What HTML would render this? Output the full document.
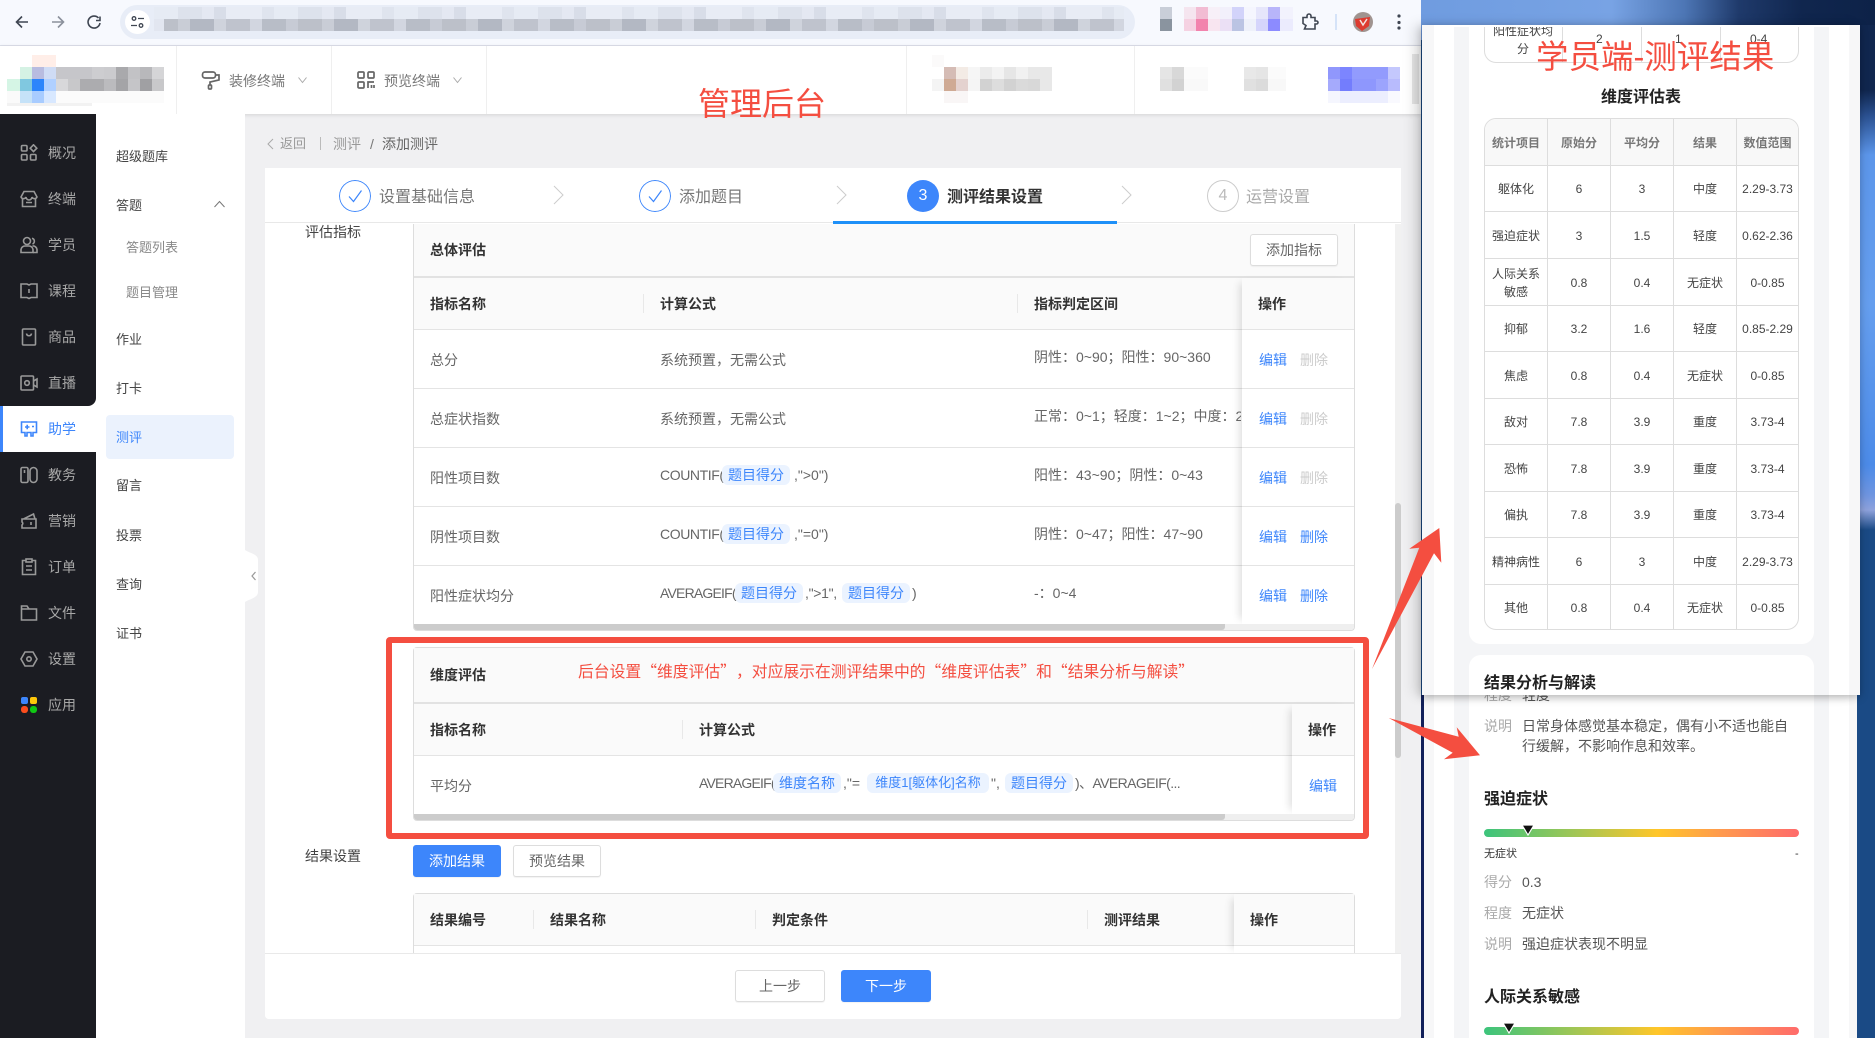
<!DOCTYPE html>
<html lang="zh-CN">
<head>
<meta charset="utf-8">
<title>管理后台 - 添加测评</title>
<style>
html,body{margin:0;padding:0;width:1875px;height:1038px;overflow:hidden;background:#1a4a85}
body{position:relative;font-family:"Liberation Sans","Noto Sans CJK SC",sans-serif;font-size:14px;color:#666}
div,span,svg,table{box-sizing:border-box}
.a{position:absolute}
.t{position:absolute;white-space:nowrap;line-height:14px;height:14px}
.h{font-weight:700;color:#333}
.g{color:#666}
.bl{color:#3d86fb}
.dis{color:#ccc}
.tag{position:absolute;height:20px;line-height:20px;background:#ebf3ff;color:#3d86fb;border-radius:6px;text-align:center;white-space:nowrap}
.ln{position:absolute;background:#e4e4e4}
.sep{position:absolute;width:1px;height:19px;background:#e8e8e8}
.btn{position:absolute;border:1px solid #ddd;border-radius:3px;background:#fff;color:#666;text-align:center;box-shadow:0 1px 1px rgba(0,0,0,.05)}
.pri{background:#3d86fb;border-color:#3d86fb;color:#fff}
.side{position:absolute;left:48px;color:#a8a8a8;line-height:14px;white-space:nowrap}
.ic{position:absolute;left:20px;width:18px;height:18px;fill:none;stroke:#999;stroke-width:1.6}
.sub{position:absolute;font-size:13px;line-height:13px;color:#444;white-space:nowrap}
.sop{position:absolute;background:#fff;box-shadow:-7px 0 8px -5px rgba(0,0,0,.14)}
.step{position:absolute;width:32px;height:32px;border-radius:50%;top:180px;text-align:center;line-height:30px;font-size:16px}
.tb{border-collapse:separate;border-spacing:0;table-layout:fixed;width:100%;font-size:12px;color:#444}
.tb td{border-right:1px solid #ddd;border-bottom:1px solid #ddd;text-align:center;padding:1px 2px 0;line-height:18px;overflow:hidden}
.tb tr td:last-child{border-right:0}
.tb tr:last-child td{border-bottom:0}
.tb .th td{background:#f8f8f8;color:#777;font-weight:700}
.ttl{position:absolute;font-weight:700;font-size:16px;line-height:16px;color:#222;white-space:nowrap}
.lab{position:absolute;left:1484px;color:#aaa;line-height:14px;white-space:nowrap}
.val{position:absolute;left:1522px;color:#555;line-height:14px;white-space:nowrap}
.bar{position:absolute;left:1484px;width:315px;height:8.5px;border-radius:4px;background:linear-gradient(90deg,#3cc47c 0%,#a5c653 30%,#ffc629 55%,#ff9a4d 75%,#ff6b6b 100%)}
.red{position:absolute;color:#f44e40;white-space:nowrap;font-weight:400}
.cjk{font-family:"Noto Sans CJK SC",sans-serif;text-spacing-trim:space-all;font-feature-settings:"palt" 0,"chws" 0,"halt" 0}
.st{position:absolute;white-space:nowrap;top:190px;font-size:16px;height:16px;line-height:16px}
</style>
</head>
<body>

<!-- desktop wallpaper -->
<div class="a" style="left:1421px;top:0;width:454px;height:40px;background:linear-gradient(90deg,#6f9ce0 0%,#78a3e4 42%,#4d76b5 58%,#1f3a6b 70%,#10264e 84%,#0d2248 100%)"></div>
<div class="a" style="left:1855px;top:25px;width:20px;height:1013px;background:linear-gradient(180deg,#10264e 0,#10264e 65px,#2a5090 90px,#5c96ea 130px,#659eee 280px,#4c8be8 440px,#6f95e0 470px,#8ea2dc 485px,#1a4a85 505px,#1a4a85 1013px)"></div>

<!-- browser window -->
<div class="a" style="left:0;top:0;width:1421px;height:1038px;background:#f0f0f2;overflow:hidden">

  <!-- chrome toolbar -->
  <div class="a" style="left:0;top:0;width:1421px;height:46px;background:#f7f9fe;border-bottom:1px solid #dcdfea"></div>
  <svg class="a" style="left:12px;top:12px" width="94" height="20" viewBox="0 0 94 20" fill="none" stroke="#3f4652" stroke-width="1.6">
    <path d="M16 10H5M10 4.500 4.500 10 10 15.500"/>
    <path d="M40 10h11M46 4.500 51.500 10 46 15.500" stroke="#8b919c"/>
    <path d="M86.500 6A6 6 0 1 0 88 11M88 4.500V8.500H84"/>
  </svg>
  <div class="a" style="left:120px;top:5px;width:1015px;height:34px;background:#e8edf7;border-radius:17px"></div>
  <div class="a" style="left:125px;top:10px;width:25px;height:24px;background:#fff;border-radius:50%"></div>
  <svg class="a" style="left:130px;top:15px" width="15" height="14" viewBox="0 0 15 14" fill="none" stroke="#3f4652" stroke-width="1.3"><circle cx="4" cy="3.500" r="1.800"/><path d="M8 3.500h6M1 10.500h6"/><circle cx="11" cy="10.500" r="1.800"/></svg>
  <div class="a" style="left:154px;top:7px;width:970px;height:12px;background:repeating-linear-gradient(90deg,#e6ebf4 0 24px,#dde2ec 24px 48px,#e4e8f2 48px 60px,#d8dde8 60px 72px,#e8ecf5 72px 108px,#dfe4ee 108px 120px)"></div>
  <div class="a" style="left:154px;top:19px;width:970px;height:12px;background:repeating-linear-gradient(90deg,#bcc0c9 0 24px,#c9cdd6 24px 36px,#b3b8c3 36px 60px,#cfd3dc 60px 72px,#bfc3cd 72px 96px,#d2d6e0 96px 108px,#b8bdc7 108px 132px,#c7cbd5 132px 144px)"></div>
  <div class="a" style="left:154px;top:19px;width:10px;height:12px;background:#e2e6f0"></div>
  <svg class="a" style="left:1160px;top:7px" width="134" height="24" shape-rendering="crispEdges">
    <rect x="0" y="0" width="12" height="12" fill="#c9ced8"/><rect x="0" y="12" width="12" height="12" fill="#8a949f"/>
    <rect x="24" y="0" width="12" height="12" fill="#f5e5ef"/><rect x="24" y="12" width="12" height="12" fill="#f5d2e2"/>
    <rect x="36" y="0" width="12" height="12" fill="#f2bcd3"/><rect x="36" y="12" width="12" height="12" fill="#f283ad"/>
    <rect x="48" y="0" width="12" height="12" fill="#f7f0f8"/><rect x="48" y="12" width="12" height="12" fill="#f8e5f0"/>
    <rect x="60" y="0" width="12" height="12" fill="#f2f0fb"/><rect x="60" y="12" width="12" height="12" fill="#ebe0f5"/>
    <rect x="72" y="0" width="12" height="12" fill="#d2d3fa"/><rect x="72" y="12" width="12" height="12" fill="#bbc4e3"/>
    <rect x="84" y="0" width="12" height="12" fill="#f5f6fe"/><rect x="84" y="12" width="12" height="12" fill="#eef1fa"/>
    <rect x="96" y="0" width="12" height="12" fill="#e6e6fb"/><rect x="96" y="12" width="12" height="12" fill="#d5d5fb"/>
    <rect x="108" y="0" width="12" height="12" fill="#b8b5fa"/><rect x="108" y="12" width="12" height="12" fill="#8c8bff"/>
    <rect x="120" y="0" width="13" height="12" fill="#f2f2fd"/><rect x="120" y="12" width="13" height="12" fill="#ebebfd"/>
  </svg>
  <svg class="a" style="left:1301px;top:13px" width="18" height="18" viewBox="0 0 18 18" fill="none" stroke="#3f4652" stroke-width="1.600"><path d="M2 4.500H6V3a2 2 0 0 1 4 0V4.500H14V8h1.500a1.500 1.500 0 0 1 0 3H14V16H3.500L5 12.500 2 10.500Z"/></svg>
  <div class="a" style="left:1335px;top:14px;width:2px;height:16px;background:#d5e3f8"></div>
  <svg class="a" style="left:1353px;top:12px" width="20" height="20" viewBox="0 0 20 20"><circle cx="10" cy="10" r="10" fill="#a09490"/><path d="M2 7 17 5 16 14 9 19 3 14Z" fill="#dd3b30"/><path d="M7 8l3 5 4-6" fill="none" stroke="#f3e3e0" stroke-width="1.500"/></svg>
  <svg class="a" style="left:1396px;top:13px" width="6" height="18"><circle cx="3" cy="3" r="1.600" fill="#3f4652"/><circle cx="3" cy="9.500" r="1.600" fill="#3f4652"/><circle cx="3" cy="15" r="1.600" fill="#3f4652"/></svg>

  <!-- app top bar -->
  <div class="a" style="left:0;top:46px;width:1421px;height:68px;background:#fff;box-shadow:0 1px 4px rgba(0,0,0,.12)"></div>
  <svg class="a" style="left:7px;top:55px" width="158" height="52" shape-rendering="crispEdges">
    <rect x="25" y="0" width="24" height="12" fill="#ffeee8"/>
    <rect x="13" y="12" width="12" height="12" fill="#d5f2e4"/><rect x="25" y="12" width="12" height="12" fill="#b8bce0"/><rect x="37" y="12" width="12" height="12" fill="#cfdcf5"/>
    <rect x="49" y="12" width="36" height="12" fill="#c6c6ca"/><rect x="85" y="12" width="12" height="12" fill="#cdcdd0"/><rect x="97" y="12" width="12" height="12" fill="#cbcbce"/><rect x="109" y="12" width="12" height="12" fill="#a9a9ac"/><rect x="121" y="12" width="12" height="12" fill="#c2c2c5"/><rect x="133" y="12" width="12" height="12" fill="#b8b8bb"/><rect x="145" y="12" width="12" height="12" fill="#d5d5d7"/>
    <rect x="0" y="24" width="13" height="12" fill="#d5f5e5"/><rect x="13" y="24" width="12" height="12" fill="#80c8e0"/><rect x="25" y="24" width="12" height="12" fill="#2c85fb"/><rect x="37" y="24" width="12" height="12" fill="#b0d0ff"/>
    <rect x="49" y="24" width="12" height="12" fill="#d8d8da"/><rect x="61" y="24" width="12" height="12" fill="#c8c8ca"/><rect x="73" y="24" width="24" height="12" fill="#acacaf"/><rect x="97" y="24" width="12" height="12" fill="#bbbbbe"/><rect x="109" y="24" width="12" height="12" fill="#a4a4a7"/><rect x="121" y="24" width="12" height="12" fill="#c5c5c8"/><rect x="133" y="24" width="12" height="12" fill="#a0a0a3"/><rect x="145" y="24" width="12" height="12" fill="#c8c8ca"/>
    <rect x="0" y="36" width="13" height="12" fill="#fafafa"/><rect x="13" y="36" width="12" height="12" fill="#c5e2f8"/><rect x="25" y="36" width="12" height="12" fill="#a8ccff"/><rect x="37" y="36" width="12" height="12" fill="#d8e8ff"/><rect x="49" y="36" width="108" height="12" fill="#fbfbfb"/>
    <rect x="0" y="48" width="85" height="3" fill="#f2f2f2"/>
  </svg>
  <div class="a" style="left:176px;top:46px;width:1px;height:68px;background:#efefef"></div>
  <div class="a" style="left:331px;top:46px;width:1px;height:68px;background:#efefef"></div>
  <div class="a" style="left:486px;top:46px;width:1px;height:68px;background:#efefef"></div>
  <div class="a" style="left:906px;top:46px;width:1px;height:68px;background:#efefef"></div>
  <div class="a" style="left:1134px;top:46px;width:1px;height:68px;background:#efefef"></div>

  <svg class="a" style="left:201px;top:70px" width="20" height="20" viewBox="0 0 20 20" fill="none" stroke="#666" stroke-width="1.700"><rect x="1.500" y="2" width="13" height="6" rx="2.500"/><path d="M14.500 5H18V10L9 12V15"/><rect x="7.500" y="15" width="3" height="4" rx="1"/></svg>
  <div class="t" style="left:229px;top:74px;color:#777">装修终端</div>
  <svg class="a" style="left:298px;top:76px" width="9" height="8" fill="none" stroke="#aaa"><path d="M.5 1.500 4.500 6.500 8.500 1.500"/></svg>
  <svg class="a" style="left:357px;top:71px" width="18" height="18" viewBox="0 0 18 18" fill="none" stroke="#666" stroke-width="1.700"><rect x="1" y="1" width="6" height="6" rx="1"/><rect x="11" y="1" width="6" height="6" rx="1"/><rect x="1" y="11" width="6" height="6" rx="1"/><path d="M11 17V11H17M14.500 14V17M17 14V17"/></svg>
  <div class="t" style="left:384px;top:74px;color:#777">预览终端</div>
  <svg class="a" style="left:453px;top:76px" width="9" height="8" fill="none" stroke="#aaa"><path d="M.5 1.500 4.500 6.500 8.500 1.500"/></svg>

  <svg class="a" style="left:932px;top:55px" width="122" height="48" shape-rendering="crispEdges">
    <rect x="0" y="0" width="12" height="12" fill="#fbfafa"/><rect x="12" y="12" width="12" height="12" fill="#d5bcb5"/><rect x="24" y="12" width="12" height="12" fill="#f3ebe5"/><rect x="36" y="12" width="12" height="12" fill="#f6f6f6"/><rect x="48" y="12" width="12" height="12" fill="#ebebeb"/><rect x="60" y="12" width="12" height="12" fill="#f3f3f3"/><rect x="72" y="12" width="12" height="12" fill="#e6e6e6"/><rect x="84" y="12" width="12" height="12" fill="#f1f1f1"/><rect x="96" y="12" width="24" height="12" fill="#e8e8e8"/>
    <rect x="0" y="24" width="12" height="12" fill="#f4f4f4"/><rect x="12" y="24" width="12" height="12" fill="#cfaa94"/><rect x="24" y="24" width="12" height="12" fill="#e4d2cf"/><rect x="36" y="24" width="12" height="12" fill="#f5f5f5"/><rect x="48" y="24" width="12" height="12" fill="#d2d2d2"/><rect x="60" y="24" width="12" height="12" fill="#dddddd"/><rect x="72" y="24" width="12" height="12" fill="#d2d2d2"/><rect x="84" y="24" width="12" height="12" fill="#dadada"/><rect x="96" y="24" width="12" height="12" fill="#d8d8d8"/><rect x="108" y="24" width="12" height="12" fill="#e8e8e8"/>
    <rect x="12" y="36" width="24" height="12" fill="#f9f6f6"/>
  </svg>
  <svg class="a" style="left:1160px;top:67px" width="126" height="24" shape-rendering="crispEdges">
    <rect x="0" y="0" width="12" height="12" fill="#e5e5e5"/><rect x="12" y="0" width="12" height="12" fill="#d8d8d8"/><rect x="24" y="0" width="24" height="12" fill="#fbfbfb"/>
    <rect x="0" y="12" width="12" height="12" fill="#e0e0e0"/><rect x="12" y="12" width="12" height="12" fill="#d2d2d2"/><rect x="24" y="12" width="24" height="12" fill="#f9f9f9"/>
    <rect x="84" y="0" width="12" height="12" fill="#e8e8e8"/><rect x="96" y="0" width="12" height="12" fill="#e5e5e5"/><rect x="108" y="0" width="18" height="12" fill="#fbfbfb"/>
    <rect x="84" y="12" width="12" height="12" fill="#e0e0e0"/><rect x="96" y="12" width="12" height="12" fill="#dbdbdb"/><rect x="108" y="12" width="18" height="12" fill="#f8f8f8"/>
  </svg>
  <svg class="a" style="left:1328px;top:67px" width="72" height="36" shape-rendering="crispEdges">
    <rect x="0" y="0" width="12" height="12" fill="#9097fc"/><rect x="12" y="0" width="12" height="12" fill="#7c85ff"/><rect x="24" y="0" width="36" height="12" fill="#929bfd"/><rect x="60" y="0" width="12" height="12" fill="#c4c8fd"/>
    <rect x="0" y="12" width="12" height="12" fill="#a5aafc"/><rect x="12" y="12" width="12" height="12" fill="#737dfd"/><rect x="24" y="12" width="24" height="12" fill="#8e97fd"/><rect x="48" y="12" width="12" height="12" fill="#9ca4fd"/><rect x="60" y="12" width="12" height="12" fill="#b8bbfd"/>
    <rect x="0" y="24" width="12" height="12" fill="#f5f6fe"/><rect x="12" y="24" width="48" height="12" fill="#eceefe"/><rect x="60" y="24" width="12" height="12" fill="#f9f9fe"/>
  </svg>
  <div class="a" style="left:1412px;top:54px;width:7px;height:50px;background:#e6e6e6"></div>

  <!-- dark sidebar -->
  <div class="a" style="left:0;top:114px;width:96px;height:924px;background:#1b1c22"></div>
  <div class="a" style="left:0;top:406px;width:96px;height:46px;background:#fff"></div>
  <div class="a" style="left:0;top:398px;width:96px;height:8px;background:#1b1c22;border-bottom-right-radius:8px;box-shadow:8px 0 0 #fff"></div>
  <div class="a" style="left:0;top:452px;width:96px;height:8px;background:#1b1c22;border-top-right-radius:8px"></div>
  <div class="a" style="left:0;top:406px;width:3px;height:46px;background:#3d86fb"></div>

  <svg class="ic" style="top:144px" viewBox="0 0 18 18"><rect x="1.500" y="1.500" width="5.500" height="5.500" rx="1"/><path d="M13.500 .8 16.800 4.200 13.500 7.600 10.200 4.200Z"/><rect x="1.500" y="10.500" width="5.500" height="5.500" rx="1"/><rect x="10.500" y="10.500" width="5.500" height="5.500" rx="1"/></svg>
  <div class="side" style="top:146px">概况</div>
  <svg class="ic" style="top:190px" viewBox="0 0 18 18"><path d="M4 1.500H14L17 7A2.700 2.700 0 0 1 12 7 3 3 0 0 1 6 7 2.700 2.700 0 0 1 1 7Z"/><path d="M2.500 9V16.500H15.500V9M6 12.500H12"/></svg>
  <div class="side" style="top:192px">终端</div>
  <svg class="ic" style="top:236px" viewBox="0 0 18 18"><circle cx="7" cy="5" r="3.500"/><path d="M1 16.500V13.500A4 4 0 0 1 5 10H9A4 4 0 0 1 13 13.500V16.500Z"/><path d="M12 2.300A3 3 0 0 1 12.500 8M12.500 10A4 4 0 0 1 17 13.500V16.500H13"/></svg>
  <div class="side" style="top:238px">学员</div>
  <svg class="ic" style="top:282px" viewBox="0 0 18 18"><path d="M1 2H7L9 3 11 2H17V15.500H11L9 16.500 7 15.500H1ZM9 7V11"/></svg>
  <div class="side" style="top:284px">课程</div>
  <svg class="ic" style="top:328px" viewBox="0 0 18 18"><rect x="2.500" y="1" width="13" height="16" rx="1"/><path d="M6.500 5.500 C7 8.500 11 8.500 11.500 5.500"/></svg>
  <div class="side" style="top:330px">商品</div>
  <svg class="ic" style="top:374px" viewBox="0 0 18 18"><rect x="1" y="2" width="12.500" height="14" rx="1"/><circle cx="7" cy="9" r="2.300"/><path d="M13.500 7 17 5V13L13.500 11"/></svg>
  <div class="side" style="top:376px">直播</div>
  <svg class="ic" style="top:420px;stroke:#3d86fb" viewBox="0 0 18 18"><path d="M1.500 2H16.500V12.500H13V16H11V12.500H7V16H5V12.500H1.500ZM5 7H9.500M7.200 4.800V9.200M12 6.500H14"/></svg>
  <div class="side" style="top:422px;color:#3d86fb">助学</div>
  <svg class="ic" style="top:466px" viewBox="0 0 18 18"><rect x="1" y="1.500" width="7" height="15" rx="1.500"/><rect x="10" y="1.500" width="7" height="15" rx="3.500"/><path d="M4.500 4V7"/></svg>
  <div class="side" style="top:468px">教务</div>
  <svg class="ic" style="top:512px" viewBox="0 0 18 18"><path d="M2 7H16V16H2V13A1.800 1.800 0 0 0 2 10ZM3.500 7 13.500 2 15 7M11 10V13"/></svg>
  <div class="side" style="top:514px">营销</div>
  <svg class="ic" style="top:558px" viewBox="0 0 18 18"><path d="M6 2.500H2.500V16.500H15.500V2.500H12"/><rect x="6" y="1" width="6" height="3"/><path d="M6 8H12M6 12H12"/></svg>
  <div class="side" style="top:560px">订单</div>
  <svg class="ic" style="top:604px" viewBox="0 0 18 18"><path d="M1.500 2H7L9 5H16.500V16H1.500ZM1.500 5H9"/></svg>
  <div class="side" style="top:606px">文件</div>
  <svg class="ic" style="top:650px" viewBox="0 0 18 18"><path d="M5 2H13L17 9 13 16H5L1 9Z"/><circle cx="9" cy="9" r="2.200"/></svg>
  <div class="side" style="top:652px">设置</div>
  <svg class="ic" style="top:696px;stroke:none" viewBox="0 0 18 18"><rect x="1" y="1" width="7" height="7" rx="2" fill="#3d86fb"/><rect x="10" y="1" width="7" height="7" rx="2" fill="#fdc60a"/><rect x="1" y="10" width="7" height="7" rx="3" fill="#fc4d1d"/><rect x="10" y="10" width="7" height="7" rx="3" fill="#10c814"/></svg>
  <div class="side" style="top:698px">应用</div>

  <!-- secondary sidebar -->
  <div class="a" style="left:96px;top:114px;width:149px;height:924px;background:#fff"></div>
  <div class="a" style="left:106px;top:415px;width:128px;height:44px;background:#ebf2fd;border-radius:4px"></div>
  <div class="sub" style="left:116px;top:150px">超级题库</div>
  <div class="sub" style="left:116px;top:199px">答题</div>
  <svg class="a" style="left:214px;top:200px" width="11" height="8" fill="none" stroke="#777"><path d="M.5 7 5.500 1.500 10.500 7"/></svg>
  <div class="sub" style="left:126px;top:241px;color:#888">答题列表</div>
  <div class="sub" style="left:126px;top:286px;color:#888">题目管理</div>
  <div class="sub" style="left:116px;top:333px">作业</div>
  <div class="sub" style="left:116px;top:382px">打卡</div>
  <div class="sub bl" style="left:116px;top:431px;color:#3d86fb">测评</div>
  <div class="sub" style="left:116px;top:479px">留言</div>
  <div class="sub" style="left:116px;top:529px">投票</div>
  <div class="sub" style="left:116px;top:578px">查询</div>
  <div class="sub" style="left:116px;top:627px">证书</div>
  <svg class="a" style="left:245px;top:550px" width="14" height="52"><path d="M0 0 C4 3 13 4 13 10V42C13 48 4 49 0 52Z" fill="#fff"/><path d="M10.500 22 7 26 10.500 30" fill="none" stroke="#999" stroke-width="1.200"/></svg>

  <!-- breadcrumb -->
  <svg class="a" style="left:267px;top:138px" width="7" height="12" fill="none" stroke="#aaa"><path d="M6 1 1 6 6 11"/></svg>
  <div class="t" style="left:280px;top:137px;font-size:13px;color:#999">返回</div>
  <div class="a" style="left:320px;top:137px;width:1px;height:13px;background:#bbb"></div>
  <div class="t" style="left:333px;top:137px;color:#999">测评</div>
  <div class="t" style="left:370px;top:137px;color:#777">/</div>
  <div class="t" style="left:382px;top:137px;color:#666">添加测评</div>

  <!-- main card -->
  <div class="a" style="left:265px;top:168px;width:1136px;height:851px;background:#fff;border-radius:0 0 4px 4px"></div>

  <!-- steps -->
  <div class="a" style="left:265px;top:222px;width:1136px;height:1px;background:#e8e8e8"></div>
  <svg class="step" style="left:339px" viewBox="0 0 32 32" fill="none"><circle cx="16" cy="16" r="15.500" stroke="#3d86fb"/><path d="M10 16.500 14.500 21.500 22.500 10.500" stroke="#3d86fb" stroke-width="1.200"/></svg>
  <div class="st" style="left:379px;color:#777">设置基础信息</div>
  <svg class="a" style="left:553px;top:185px" width="11" height="20" fill="none" stroke="#ccc"><path d="M1 1 10 10 1 19"/></svg>
  <svg class="step" style="left:639px" viewBox="0 0 32 32" fill="none"><circle cx="16" cy="16" r="15.500" stroke="#3d86fb"/><path d="M10 16.500 14.500 21.500 22.500 10.500" stroke="#3d86fb" stroke-width="1.200"/></svg>
  <div class="st" style="left:679px;color:#777">添加题目</div>
  <svg class="a" style="left:836px;top:185px" width="11" height="20" fill="none" stroke="#ccc"><path d="M1 1 10 10 1 19"/></svg>
  <div class="step" style="left:907px;background:#3d86fb;color:#fff;line-height:32px">3</div>
  <div class="st" style="left:947px;color:#333;font-weight:700">测评结果设置</div>
  <svg class="a" style="left:1121px;top:185px" width="11" height="20" fill="none" stroke="#ccc"><path d="M1 1 10 10 1 19"/></svg>
  <div class="step" style="left:1207px;border:1px solid #ccc;color:#bbb">4</div>
  <div class="st" style="left:1246px;color:#aaa">运营设置</div>
  <div class="a" style="left:833px;top:221px;width:284px;height:3px;background:#1e90f8"></div>

  <!-- scroll viewport -->
  <div class="a" style="left:1395px;top:224px;width:6px;height:729px;background:#f1f1f1"></div>
  <div class="a" style="left:1395px;top:503px;width:6px;height:255px;background:#ccc;border-radius:3px"></div>

  <div class="t" style="left:305px;top:225px;color:#444">评估指标</div>
  <div class="t" style="left:305px;top:849px;color:#444">结果设置</div>

  <!-- table 1 -->
  <div class="a" style="left:413px;top:224px;width:942px;height:407px;border:1px solid #ddd;border-top:0;border-radius:0 0 4px 4px;background:#fff;overflow:hidden"></div>
  <div class="a" style="left:414px;top:224px;width:940px;height:105px;background:#fafafa"></div>
  <div class="ln" style="left:414px;top:276px;width:940px;height:2px;background:#e2e2e2"></div>
  <div class="ln" style="left:414px;top:329px;width:940px;height:1px"></div>
  <div class="ln" style="left:414px;top:388px;width:828px;height:1px"></div>
  <div class="ln" style="left:414px;top:447px;width:828px;height:1px"></div>
  <div class="ln" style="left:414px;top:506px;width:828px;height:1px"></div>
  <div class="ln" style="left:414px;top:565px;width:828px;height:1px"></div>
  <div class="sop" style="left:1242px;top:278px;width:112px;height:346px"></div>
  <div class="a" style="left:1242px;top:278px;width:112px;height:52px;background:#fafafa;border-bottom:1px solid #e4e4e4"></div>
  <div class="ln" style="left:1242px;top:388px;width:112px;height:1px"></div>
  <div class="ln" style="left:1242px;top:447px;width:112px;height:1px"></div>
  <div class="ln" style="left:1242px;top:506px;width:112px;height:1px"></div>
  <div class="ln" style="left:1242px;top:565px;width:112px;height:1px"></div>
  <div class="a" style="left:414px;top:624px;width:940px;height:6px;background:#efefef;border-radius:0 0 3px 3px"></div>
  <div class="a" style="left:414px;top:624px;width:811px;height:6px;background:#ccc;border-radius:0 0 3px 3px"></div>

  <div class="t h" style="left:430px;top:243px">总体评估</div>
  <div class="btn" style="left:1250px;top:234px;width:88px;height:32px;line-height:30px">添加指标</div>
  <div class="t h" style="left:430px;top:297px">指标名称</div>
  <div class="sep" style="left:643px;top:294px"></div>
  <div class="t h" style="left:660px;top:297px">计算公式</div>
  <div class="sep" style="left:1017px;top:294px"></div>
  <div class="t h" style="left:1034px;top:297px">指标判定区间</div>
  <div class="t h" style="left:1258px;top:297px">操作</div>

  <div class="t" style="left:430px;top:353px">总分</div>
  <div class="t" style="left:660px;top:353px">系统预置，无需公式</div>
  <div class="t" style="left:1034px;top:350px">阴性：0~90；阳性：90~360</div>
  <div class="t bl" style="left:1259px;top:353px">编辑</div><div class="t dis" style="left:1300px;top:353px">删除</div>

  <div class="t" style="left:430px;top:412px">总症状指数</div>
  <div class="t" style="left:660px;top:412px">系统预置，无需公式</div>
  <div class="a" style="left:1034px;top:409px;width:207px;height:16px;overflow:hidden;white-space:nowrap;line-height:14px">正常：0~1；轻度：1~2；中度：2~3</div>
  <div class="t bl" style="left:1259px;top:412px">编辑</div><div class="t dis" style="left:1300px;top:412px">删除</div>

  <div class="t" style="left:430px;top:471px">阳性项目数</div>
  <div class="t" style="left:660px;top:468px;letter-spacing:-.4px">COUNTIF(</div>
  <div class="tag" style="left:722px;top:465px;width:68px">题目得分</div>
  <div class="t" style="left:794px;top:468px">,"&gt;0")</div>
  <div class="t" style="left:1034px;top:468px">阳性：43~90；阴性：0~43</div>
  <div class="t bl" style="left:1259px;top:471px">编辑</div><div class="t dis" style="left:1300px;top:471px">删除</div>

  <div class="t" style="left:430px;top:530px">阴性项目数</div>
  <div class="t" style="left:660px;top:527px;letter-spacing:-.4px">COUNTIF(</div>
  <div class="tag" style="left:722px;top:524px;width:68px">题目得分</div>
  <div class="t" style="left:794px;top:527px">,"=0")</div>
  <div class="t" style="left:1034px;top:527px">阴性：0~47；阳性：47~90</div>
  <div class="t bl" style="left:1259px;top:530px">编辑</div><div class="t bl" style="left:1300px;top:530px">删除</div>

  <div class="t" style="left:430px;top:589px">阳性症状均分</div>
  <div class="t" style="left:660px;top:586px;letter-spacing:-.8px">AVERAGEIF(</div>
  <div class="tag" style="left:735px;top:583px;width:68px">题目得分</div>
  <div class="t" style="left:805px;top:586px;letter-spacing:-.3px">,"&gt;1",</div>
  <div class="tag" style="left:842px;top:583px;width:68px">题目得分</div>
  <div class="t" style="left:912px;top:586px">)</div>
  <div class="t" style="left:1034px;top:586px">-：0~4</div>
  <div class="t bl" style="left:1259px;top:589px">编辑</div><div class="t bl" style="left:1300px;top:589px">删除</div>

  <!-- table 2 -->
  <div class="a" style="left:413px;top:647px;width:942px;height:174px;border:1px solid #ddd;border-radius:4px;background:#fff;overflow:hidden"></div>
  <div class="a" style="left:414px;top:648px;width:940px;height:107px;background:#fafafa"></div>
  <div class="ln" style="left:414px;top:702px;width:940px;height:2px;background:#e2e2e2"></div>
  <div class="ln" style="left:414px;top:755px;width:940px;height:1px"></div>
  <div class="sop" style="left:1292px;top:704px;width:62px;height:110px"></div>
  <div class="a" style="left:1292px;top:704px;width:62px;height:52px;background:#fafafa;border-bottom:1px solid #e4e4e4"></div>
  <div class="a" style="left:414px;top:814px;width:940px;height:6px;background:#efefef;border-radius:0 0 3px 3px"></div>
  <div class="a" style="left:414px;top:814px;width:811px;height:6px;background:#ccc;border-radius:0 0 3px 3px"></div>

  <div class="t h" style="left:430px;top:668px">维度评估</div>
  <div class="t h" style="left:430px;top:723px">指标名称</div>
  <div class="sep" style="left:682px;top:720px"></div>
  <div class="t h" style="left:699px;top:723px">计算公式</div>
  <div class="t h" style="left:1308px;top:723px">操作</div>
  <div class="t" style="left:430px;top:779px">平均分</div>
  <div class="t" style="left:699px;top:776px;letter-spacing:-.8px">AVERAGEIF(</div>
  <div class="tag" style="left:773px;top:773px;width:68px">维度名称</div>
  <div class="t" style="left:843px;top:776px">,"=</div>
  <div class="tag" style="left:867px;top:773px;width:122px;font-size:13px">维度1[躯体化]名称</div>
  <div class="t" style="left:991px;top:776px">",</div>
  <div class="tag" style="left:1005px;top:773px;width:68px">题目得分</div>
  <div class="t" style="left:1075px;top:776px;letter-spacing:-.6px">)、AVERAGEIF(...</div>
  <div class="t bl" style="left:1309px;top:779px">编辑</div>

  <!-- result buttons -->
  <div class="btn pri" style="left:413px;top:845px;width:88px;height:32px;line-height:30px">添加结果</div>
  <div class="btn" style="left:513px;top:845px;width:88px;height:32px;line-height:30px">预览结果</div>

  <!-- table 3 -->
  <div class="a" style="left:413px;top:893px;width:942px;height:60px;border:1px solid #ddd;border-bottom:0;border-radius:4px 4px 0 0;background:#fff;overflow:hidden"></div>
  <div class="a" style="left:414px;top:894px;width:940px;height:52px;background:#fafafa;border-bottom:1px solid #e4e4e4"></div>
  <div class="sop" style="left:1234px;top:894px;width:120px;height:59px"></div>
  <div class="a" style="left:1234px;top:894px;width:120px;height:52px;background:#fafafa;border-bottom:1px solid #e4e4e4"></div>
  <div class="t h" style="left:430px;top:913px">结果编号</div>
  <div class="sep" style="left:533px;top:910px"></div>
  <div class="t h" style="left:550px;top:913px">结果名称</div>
  <div class="sep" style="left:755px;top:910px"></div>
  <div class="t h" style="left:772px;top:913px">判定条件</div>
  <div class="sep" style="left:1087px;top:910px"></div>
  <div class="t h" style="left:1104px;top:913px">测评结果</div>
  <div class="t h" style="left:1250px;top:913px">操作</div>

  <!-- footer -->
  <div class="a" style="left:265px;top:953px;width:1136px;height:66px;background:#fff;border-top:1px solid #e9e9e9;border-radius:0 0 4px 4px"></div>
  <div class="btn" style="left:735px;top:970px;width:90px;height:32px;line-height:30px">上一步</div>
  <div class="btn pri" style="left:841px;top:970px;width:90px;height:32px;line-height:30px">下一步</div>
</div>

<!-- dark window edge -->
<div class="a" style="left:1421px;top:695px;width:3px;height:343px;background:#12205a"></div>

<!-- lower student screenshot -->
<div class="a" style="left:1424px;top:695px;width:433px;height:343px;overflow:hidden;background:#f7f7f8">
  <div class="a" style="left:-1424px;top:-695px;width:1875px;height:1038px">
    <div class="a" style="left:1434px;top:695px;width:415px;height:343px;background:#fff"></div>
    <div class="a" style="left:1454px;top:695px;width:375px;height:343px;background:#f4f5f7"></div>
    <div class="a" style="left:1469px;top:695px;width:345px;height:343px;background:#fff"></div>

    <div class="lab" style="top:688px">程度</div>
    <div class="val" style="top:688px">轻度</div>
    <div class="lab" style="top:719px">说明</div>
    <div class="val" style="top:719px">日常身体感觉基本稳定，偶有小不适也能自</div>
    <div class="val" style="top:739px">行缓解，不影响作息和效率。</div>

    <div class="ttl" style="left:1484px;top:792px">强迫症状</div>
    <div class="bar" style="top:828.500px"></div>
    <svg class="a" style="left:1521px;top:824px" width="14" height="13"><path d="M1 1H13L7 11Z" fill="#111" stroke="#fff" stroke-width="1.200"/></svg>
    <div class="a" style="left:1484px;top:848px;font-size:11px;line-height:12px;color:#333">无症状</div>
    <div class="a" style="left:1795px;top:848px;font-size:11px;line-height:12px;color:#333">-</div>
    <div class="lab" style="top:875px">得分</div><div class="val" style="top:875px">0.3</div>
    <div class="lab" style="top:906px">程度</div><div class="val" style="top:906px">无症状</div>
    <div class="lab" style="top:937px">说明</div><div class="val" style="top:937px">强迫症状表现不明显</div>

    <div class="ttl" style="left:1484px;top:990px">人际关系敏感</div>
    <div class="bar" style="top:1026.500px"></div>
    <svg class="a" style="left:1502px;top:1022px" width="14" height="13"><path d="M1 1H13L7 11Z" fill="#111" stroke="#fff" stroke-width="1.200"/></svg>
  </div>
</div>

<!-- upper student panel -->
<div class="a" style="left:1422px;top:25px;width:438px;height:670px;overflow:hidden;background:#f7f7f8;box-shadow:0 2px 8px rgba(0,0,0,.25),-8px 0 12px rgba(0,0,0,.12)">
  <div class="a" style="left:-1422px;top:-25px;width:1875px;height:1038px">
    <div class="a" style="left:1434px;top:25px;width:415px;height:670px;background:#fff"></div>
    <div class="a" style="left:1454px;top:25px;width:375px;height:670px;background:#f4f5f7"></div>
    <div class="a" style="left:1469px;top:25px;width:345px;height:619px;background:#fff;border-radius:0 0 12px 12px"></div>
    <div class="a" style="left:1469px;top:655px;width:345px;height:60px;background:#fff;border-radius:12px 12px 0 0"></div>

    <!-- clipped upper table -->
    <div class="a" style="left:1484px;top:5px;width:315px;height:57.500px;border:1px solid #ddd;border-radius:0 0 12px 12px"></div>
    <div class="a" style="left:1562px;top:25px;width:1px;height:37px;background:#ddd"></div>
    <div class="a" style="left:1641px;top:25px;width:1px;height:37px;background:#ddd"></div>
    <div class="a" style="left:1720px;top:25px;width:1px;height:37px;background:#ddd"></div>
    <div class="a" style="left:1493px;top:22px;width:60px;text-align:center;font-size:12px;line-height:18px;color:#444">阳性症状均分</div>
    <div class="a" style="left:1596px;top:33px;font-size:12px;line-height:12px;color:#444">2</div>
    <div class="a" style="left:1675px;top:33px;font-size:12px;line-height:12px;color:#444">1</div>
    <div class="a" style="left:1750px;top:33px;font-size:12px;line-height:12px;color:#444">0-4</div>
    <div class="a" style="left:1434px;top:25px;width:415px;height:2px;background:#fff"></div>

    <div class="ttl" style="left:1601px;top:90px">维度评估表</div>

    <div class="a" style="left:1484px;top:118px;width:315px;height:512px;border:1px solid #ddd;border-radius:12px;overflow:hidden;background:#fff">
      <table class="tb">
        <colgroup><col style="width:63px"><col style="width:63px"><col style="width:63px"><col style="width:63px"><col></colgroup>
        <tr class="th" style="height:47px"><td>统计项目</td><td>原始分</td><td>平均分</td><td>结果</td><td>数值范围</td></tr>
        <tr style="height:46px"><td>躯体化</td><td>6</td><td>3</td><td>中度</td><td>2.29-3.73</td></tr>
        <tr style="height:47px"><td>强迫症状</td><td>3</td><td>1.5</td><td>轻度</td><td>0.62-2.36</td></tr>
        <tr style="height:47px"><td>人际关系敏感</td><td>0.8</td><td>0.4</td><td>无症状</td><td>0-0.85</td></tr>
        <tr style="height:46px"><td>抑郁</td><td>3.2</td><td>1.6</td><td>轻度</td><td>0.85-2.29</td></tr>
        <tr style="height:47px"><td>焦虑</td><td>0.8</td><td>0.4</td><td>无症状</td><td>0-0.85</td></tr>
        <tr style="height:46px"><td>敌对</td><td>7.8</td><td>3.9</td><td>重度</td><td>3.73-4</td></tr>
        <tr style="height:47px"><td>恐怖</td><td>7.8</td><td>3.9</td><td>重度</td><td>3.73-4</td></tr>
        <tr style="height:46px"><td>偏执</td><td>7.8</td><td>3.9</td><td>重度</td><td>3.73-4</td></tr>
        <tr style="height:47px"><td>精神病性</td><td>6</td><td>3</td><td>中度</td><td>2.29-3.73</td></tr>
        <tr style="height:45px"><td>其他</td><td>0.8</td><td>0.4</td><td>无症状</td><td>0-0.85</td></tr>
      </table>
    </div>

    <div class="ttl" style="left:1484px;top:676px;font-size:16px">结果分析与解读</div>
  </div>
</div>

<!-- annotations -->
<div class="a" style="left:386px;top:637px;width:983px;height:202px;border:6px solid #f44e40;border-radius:4px"></div>
<svg class="a" style="left:1360px;top:500px" width="140" height="280"><polygon points="12,169 59.300,47.700 49.300,48.700 79.300,28 81.300,62.700 74,53.300" fill="#f44e40"/><polygon points="28.700,218 98.700,236.700 96.700,227.300 120,255.300 84,259.300 92.700,252.700" fill="#f44e40"/></svg>
<div class="red" style="left:698px;top:87px;font-size:32px;line-height:34px">管理后台</div>
<div class="red" style="left:1536px;top:40px;font-size:32.500px;line-height:34px">学员端-测评结果</div>
<div class="red cjk" style="left:578px;top:663px;font-size:15.800px;line-height:16px">后台设置“维度评估”，对应展示在测评结果中的“维度评估表”和“结果分析与解读”</div>

</body>
</html>
